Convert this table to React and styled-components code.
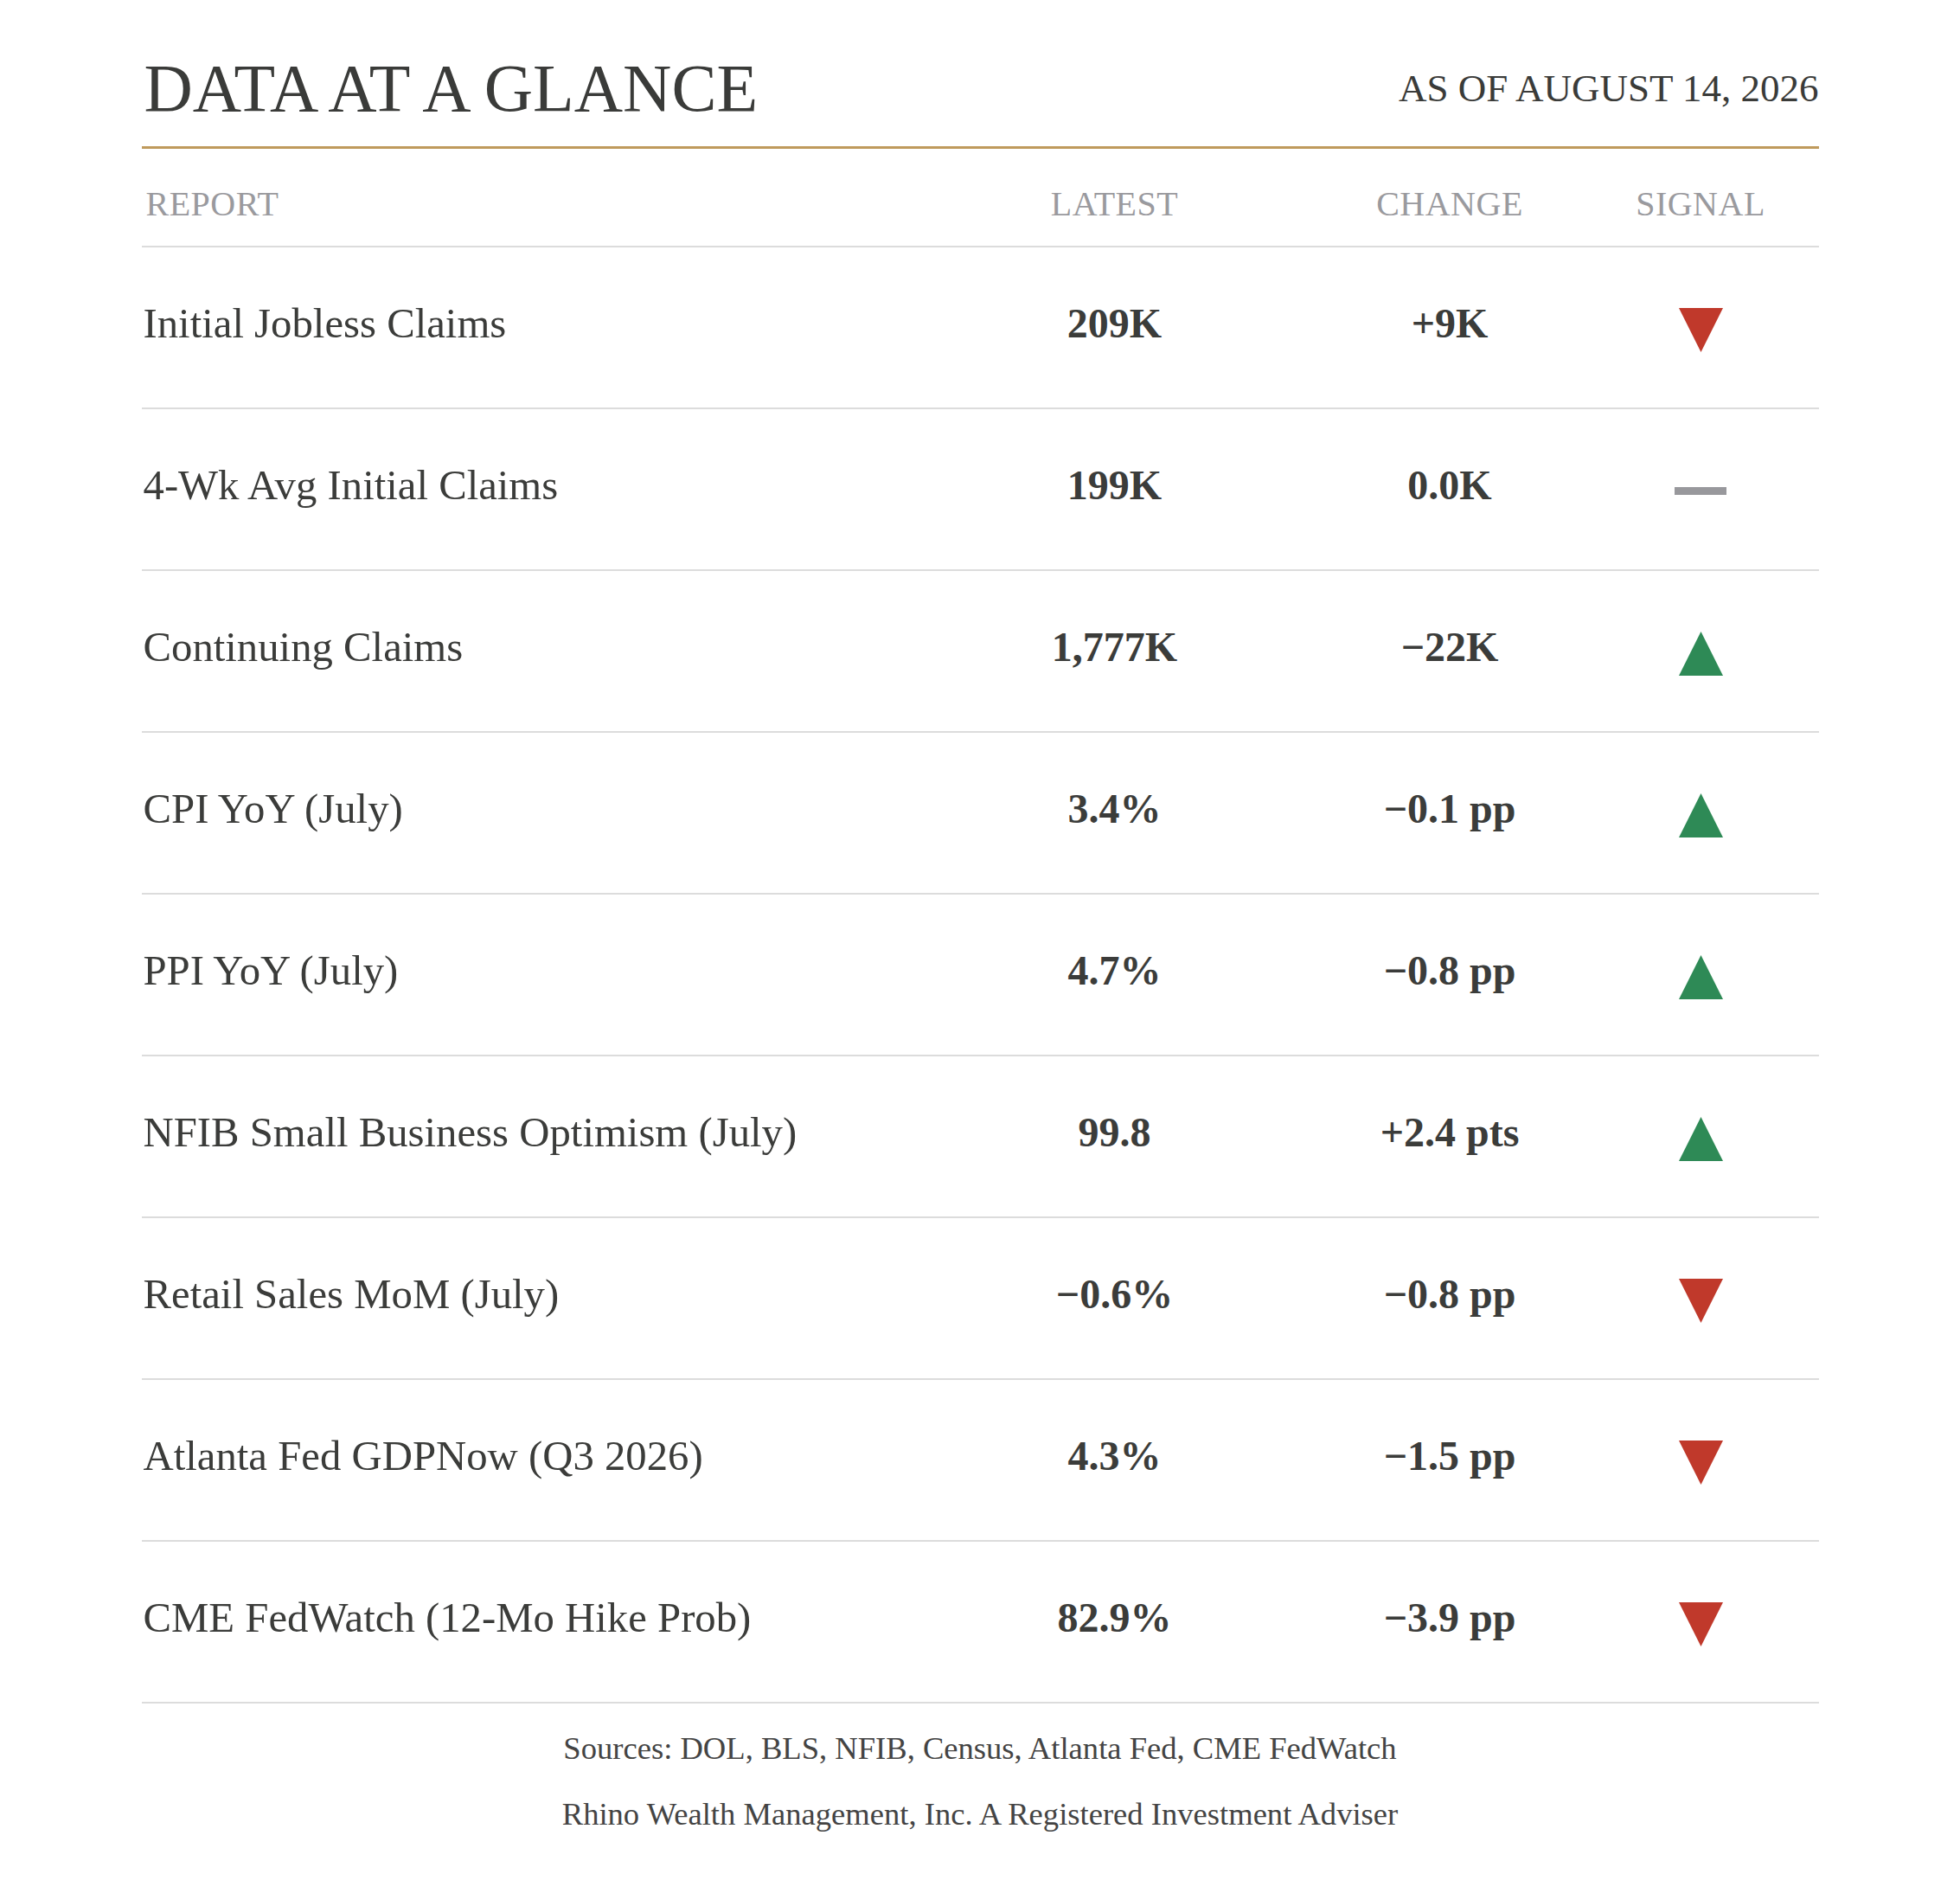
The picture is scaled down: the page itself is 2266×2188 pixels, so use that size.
import React from 'react';
import styled, { createGlobalStyle, css } from 'styled-components';

const GlobalStyle = createGlobalStyle`
  html, body {
    margin: 0;
    padding: 0;
    background: #ffffff;
  }
  body {
    font-family: "Liberation Serif", "Times New Roman", serif;
    color: #3b3c3a;
  }
`

const Page = styled.div`
  width: 1939px;
  margin: 0 auto;
  padding-top: 63px;
  padding-bottom: 60px;
`

const Header = styled.header`
  display: flex;
  justify-content: space-between;
  align-items: center;
  padding-bottom: 28px;
  border-bottom: 3px solid #bf9a5c;
`

const Title = styled.h1`
  margin: 0 0 0 3px;
  font-size: 78px;
  line-height: 1;
  font-weight: 400;
  color: #3a3b39;
`

const AsOf = styled.div`
  font-size: 45px;
  line-height: 1;
  color: #3a3b39;
`

const columns = css`
  display: grid;
  grid-template-columns: 891px 468px 307px 273px;
  border-bottom: 2px solid #dcdcdc;
`

const HeadRow = styled.div`
  ${columns}
  padding: 44px 0 28px;
`

const HeadCell = styled.div`
  font-size: 40px;
  line-height: 1;
  color: #9a9a9e;
  letter-spacing: 0.5px;
  text-align: ${(p) => (p.$left ? 'left' : 'center')};
  padding-left: ${(p) => (p.$left ? '5px' : '0')};
`

const Row = styled.div`
  ${columns}
  box-sizing: border-box;
  height: 187px;
  padding-top: 64px;
  align-items: start;
`

const Name = styled.div`
  font-size: 48.75px;
  line-height: 48px;
  padding-left: 2px;
`

const Value = styled.div`
  font-size: 48px;
  line-height: 1;
  font-weight: 700;
  text-align: center;
`

const SignalCell = styled.div`
  height: 48px;
  display: flex;
  align-items: center;
  justify-content: center;
`

const Arrow = styled.svg`
  width: 51px;
  height: 51px;
  margin-top: 15px;
  display: block;
`

const Flat = styled.span`
  display: block;
  width: 60px;
  height: 9px;
  margin-top: 12px;
  background: #98989c;
`

const Footer = styled.footer`
  display: flex;
  flex-direction: column;
  align-items: center;
  gap: 39px;
  padding-top: 34px;
`

const Note = styled.p`
  margin: 0;
  font-size: 36.6px;
  line-height: 1;
  color: #444444;
`

const Signal = ({ dir }) => {
  if (dir === 'flat') return <Flat />
  if (dir === 'up') {
    return (
      <Arrow viewBox="0 0 51 51">
        <polygon points="25.5,0 51,51 0,51" fill="#2e8a56" />
      </Arrow>
    )
  }
  return (
    <Arrow viewBox="0 0 51 51">
      <polygon points="0,0 51,0 25.5,51" fill="#c0392b" />
    </Arrow>
  )
}

const rows = [
  ['Initial Jobless Claims', '209K', '+9K', 'down'],
  ['4-Wk Avg Initial Claims', '199K', '0.0K', 'flat'],
  ['Continuing Claims', '1,777K', '\u221222K', 'up'],
  ['CPI YoY (July)', '3.4%', '\u22120.1 pp', 'up'],
  ['PPI YoY (July)', '4.7%', '\u22120.8 pp', 'up'],
  ['NFIB Small Business Optimism (July)', '99.8', '+2.4 pts', 'up'],
  ['Retail Sales MoM (July)', '\u22120.6%', '\u22120.8 pp', 'down'],
  ['Atlanta Fed GDPNow (Q3 2026)', '4.3%', '\u22121.5 pp', 'down'],
  ['CME FedWatch (12-Mo Hike Prob)', '82.9%', '\u22123.9 pp', 'down'],
]

const App = () => {
  return (
    <>
      <GlobalStyle />
      <Page>
        <Header>
          <Title>DATA AT A GLANCE</Title>
          <AsOf>AS OF AUGUST 14, 2026</AsOf>
        </Header>

        <HeadRow>
          <HeadCell $left>REPORT</HeadCell>
          <HeadCell>LATEST</HeadCell>
          <HeadCell>CHANGE</HeadCell>
          <HeadCell>SIGNAL</HeadCell>
        </HeadRow>

        {rows.map(([name, latest, change, dir]) => (
          <Row key={name}>
            <Name>{name}</Name>
            <Value>{latest}</Value>
            <Value>{change}</Value>
            <SignalCell>
              <Signal dir={dir} />
            </SignalCell>
          </Row>
        ))}

        <Footer>
          <Note>Sources: DOL, BLS, NFIB, Census, Atlanta Fed, CME FedWatch</Note>
          <Note>Rhino Wealth Management, Inc. A Registered Investment Adviser</Note>
        </Footer>
      </Page>
    </>
  )
}

export default App;
